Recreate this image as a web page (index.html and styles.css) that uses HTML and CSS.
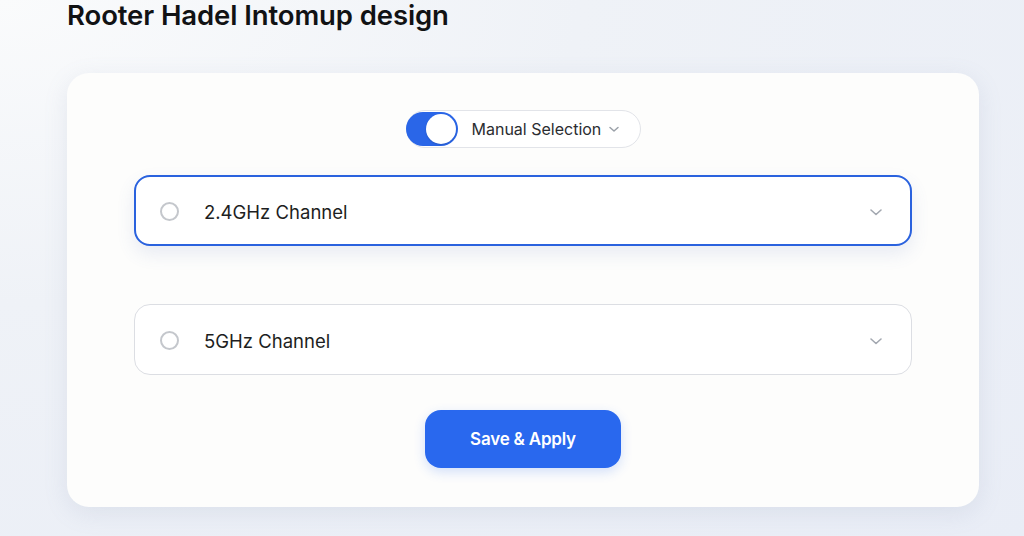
FILE: index.html
```html
<!DOCTYPE html>
<html lang="en">
<head>
<meta charset="utf-8">
<title>Rooter Hadel Intomup design</title>
<link rel="stylesheet" href="styles.css">
</head>
<body>
<main class="page">
  <h1 class="page-title">Rooter Hadel Intomup design</h1>
  <section class="card">
    <div class="mode-picker">
      <span class="switch"><span class="switch-knob"></span></span>
      <span class="mode-label">Manual Selection</span>
      <svg class="mode-chevron" width="14" height="14" viewBox="0 0 14 14"><path d="M3 5.5l4 3.5 4-3.5" fill="none" stroke="#9aa0a8" stroke-width="1.5" stroke-linecap="round" stroke-linejoin="round"/></svg>
    </div>
    <div class="channel channel-active">
      <span class="radio"></span>
      <span class="channel-name">2.4GHz Channel</span>
      <svg class="channel-chevron" width="18" height="18" viewBox="0 0 18 18"><path d="M4 7l5 4.5L14 7" fill="none" stroke="#a3a8b0" stroke-width="1.6" stroke-linecap="round" stroke-linejoin="round"/></svg>
    </div>
    <div class="channel">
      <span class="radio"></span>
      <span class="channel-name">5GHz Channel</span>
      <svg class="channel-chevron" width="18" height="18" viewBox="0 0 18 18"><path d="M4 7l5 4.5L14 7" fill="none" stroke="#a3a8b0" stroke-width="1.6" stroke-linecap="round" stroke-linejoin="round"/></svg>
    </div>
    <button class="apply" type="button">Save &amp; Apply</button>
  </section>
</main>
</body>
</html>
```
FILE: styles.css
```css
html, body {
  margin: 0;
  height: 100%;
}

body {
  background: radial-gradient(ellipse at 0% 0%, #fafbfc 0%, #eff2f7 40%, #e9edf6 100%);
  font-family: Inter, "Noto Sans", sans-serif;
  color: #1b1c1f;
  overflow: hidden;
}

.page {
  padding: 0 45px 0 67px;
  display: flex;
  flex-direction: column;
}

.page-title {
  margin: 0;
  font-size: 27.5px;
  line-height: 30px;
  font-weight: 600;
  letter-spacing: -0.1px;
  color: #111214;
  height: 30px;
}

.card {
  margin-top: 43px;
  width: 912px;
  height: 434px;
  box-sizing: border-box;
  background: #fdfdfc;
  border-radius: 22px;
  box-shadow: 0 6px 24px rgba(120, 135, 170, 0.14);
  padding: 37px 67px 0;
  display: flex;
  flex-direction: column;
  align-items: center;
}

.mode-picker {
  display: flex;
  align-items: center;
  height: 38px;
  width: 235px;
  box-sizing: border-box;
  border: 1px solid #e2e4e9;
  border-radius: 19px;
  background: #fff;
  padding: 0;
  white-space: nowrap;
}

.switch {
  flex-shrink: 0;
  width: 52px;
  height: 34px;
  margin-left: -1px;
  border-radius: 17px;
  background: #2a66e8;
  display: flex;
  align-items: center;
  justify-content: flex-end;
  padding-right: 2px;
  box-sizing: border-box;
}

.switch-knob {
  width: 30px;
  height: 30px;
  border-radius: 50%;
  background: #fff;
  box-shadow: 0 1px 2px rgba(0, 0, 0, 0.15);
}

.mode-label {
  margin-left: 14px;
  font-size: 16px;
  color: #2b2d31;
  letter-spacing: 0;
}

.mode-chevron {
  flex-shrink: 0;
  margin-left: 6px;
}

.channel {
  align-self: stretch;
  height: 71px;
  box-sizing: border-box;
  border: 1px solid #dcdee3;
  border-radius: 16px;
  background: #fff;
  display: flex;
  align-items: center;
  padding: 2px 26px 0 25px;
}

.channel-active {
  margin-top: 27px;
  border: 2px solid #2a62de;
  padding: 2px 25px 0 24px;
  box-shadow: 0 8px 18px rgba(80, 110, 180, 0.12);
}

.channel + .channel {
  margin-top: 58px;
}

.radio {
  width: 19px;
  height: 19px;
  box-sizing: border-box;
  border: 2px solid #c4c7cc;
  border-radius: 50%;
}

.channel-name {
  margin-left: 25px;
  font-size: 18.5px;
  color: #1d1e21;
  letter-spacing: 0;
  flex: 1;
}

.apply {
  margin-top: 35px;
  width: 196px;
  height: 58px;
  border: 0;
  border-radius: 16px;
  background: #2968ee;
  color: #fff;
  font-family: Inter, "Noto Sans", sans-serif;
  font-size: 17px;
  font-weight: 600;
  letter-spacing: -0.2px;
  box-shadow: 0 4px 12px rgba(41, 104, 238, 0.2);
}
```
